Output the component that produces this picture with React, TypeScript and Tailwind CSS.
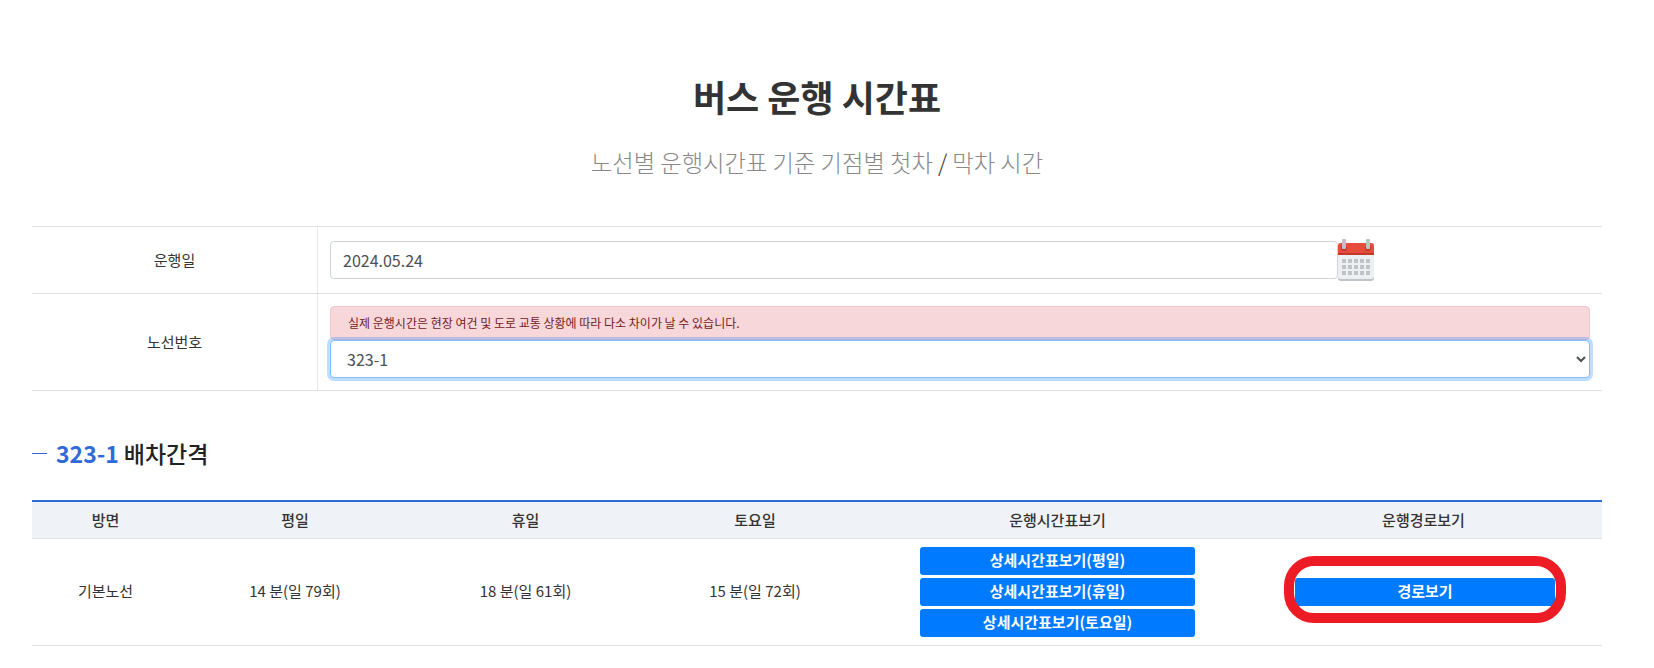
const font = `font-['Noto_Sans_CJK_KR','Noto_Sans',sans-serif]`

function CalendarIcon() {
    return (
        <svg width="36" height="42" viewBox="0 0 36 42" className="shrink-0">
            <path d="M3 4h30a3 3 0 0 1 3 3v32a3 3 0 0 1-3 3H3a3 3 0 0 1-3-3V7a3 3 0 0 1 3-3z" fill="#bdc3c7" />
            <path d="M3 4h30a3 3 0 0 1 3 3v30a3 3 0 0 1-3 3H3a3 3 0 0 1-3-3V7a3 3 0 0 1 3-3z" fill="#ecf0f1" />
            <path d="M3 4h30a3 3 0 0 1 3 3v9H0V7a3 3 0 0 1 3-3z" fill="#e74c3c" />
            <rect x="0" y="14" width="36" height="2" fill="#c0392b" />
            <circle cx="6" cy="9" r="3" fill="#c0392b" />
            <circle cx="30" cy="9" r="3" fill="#c0392b" />
            <rect x="4" y="0" width="4" height="10" rx="1" fill="#bdc3c7" />
            <rect x="28" y="0" width="4" height="10" rx="1" fill="#bdc3c7" />
            {[20, 26, 32].map((y) =>
                [4, 10, 16, 22, 28].map((x) => (
                    <rect key={`${x}-${y}`} x={x} y={y} width="4" height="4" fill="#bdc3c7" />
                ))
            )}
        </svg>
    )
}

function BlueButton({ label }: { label: string }) {
    return (
        <button className="flex h-7 w-full items-center justify-center rounded-[3px] bg-[#007bff] text-[15px] font-bold text-white">
            {label}
        </button>
    )
}

const rows = [
    { name: "기본노선", weekday: "14 분(일 79회)", holiday: "18 분(일 61회)", saturday: "15 분(일 72회)" },
]

export default function App() {
    return (
        <div className={`${font} min-h-[668px] bg-white pb-[23px] pl-8 pr-[52px] pt-[69px] text-[#333]`}>
            <div className="text-center">
                <h1 className="text-[36px] font-bold leading-[54px] text-[#333]">버스 운행 시간표</h1>
                <p className="mt-[21px] text-[23.3px] font-light leading-[36px] text-[#888]">
                    노선별 운행시간표 기준 기점별 첫차 <span className="text-[#333]">/</span> 막차 시간
                </p>
            </div>

            <div className="mt-[46px] border-t border-[#e0e0e4]">
                <div className="grid grid-cols-[286px_1fr] border-b border-[#e0e0e4]">
                    <div className="flex items-center justify-center border-r border-[#e8e8ec] text-[15px]">운행일</div>
                    <div className="flex items-center px-3 py-3">
                        <input
                            readOnly
                            value="2024.05.24"
                            className="h-[38px] w-[1008px] rounded-[4px] border border-[#ced4da] px-3 text-[16px] text-[#495057] outline-none"
                        />
                        <CalendarIcon />
                    </div>
                </div>
                <div className="grid grid-cols-[286px_1fr] border-b border-[#e0e0e4]">
                    <div className="flex items-center justify-center border-r border-[#e8e8ec] text-[15px]">노선번호</div>
                    <div className="px-3 py-3">
                        <div className="flex h-[34px] items-center rounded-[4px] border border-[#f5c6cb] bg-[#f8d7da] px-[17px] text-[12px] text-[#721c24]">
                            실제 운행시간은 현장 여건 및 도로 교통 상황에 따라 다소 차이가 날 수 있습니다.
                        </div>
                        <select
                            defaultValue="323-1"
                            className="h-[38px] w-full rounded-[4px] border border-[#80bdff] bg-white px-3 text-[16px] text-[#495057] shadow-[0_0_0_3px_rgba(0,123,255,0.25)] outline-none"
                        >
                            <option value="323-1">323-1</option>
                        </select>
                    </div>
                </div>
            </div>

            <h2 className="mt-[40px] flex items-center text-[23px] font-medium leading-[44px] text-[#222]">
                <span className="mr-[9px] h-px w-[15px] bg-[#2f6bd8]" />
                <span className="mr-[5px] font-bold text-[#2f6bd8]">323-1</span>
                배차간격
            </h2>

            <table className="mt-[25px] w-full table-fixed border-t-2 border-[#2f6bd8] text-center text-[15px]">
                <colgroup>
                    <col className="w-[147px]" />
                    <col className="w-[232px]" />
                    <col className="w-[229px]" />
                    <col className="w-[230px]" />
                    <col className="w-[375px]" />
                    <col />
                </colgroup>
                <thead>
                    <tr className="h-[37px] border-b border-[#e0e0e4] bg-[#eff2f7] text-[15px]">
                        <th className="font-medium">방면</th>
                        <th className="font-medium">평일</th>
                        <th className="font-medium">휴일</th>
                        <th className="font-medium">토요일</th>
                        <th className="font-medium">운행시간표보기</th>
                        <th className="font-medium">운행경로보기</th>
                    </tr>
                </thead>
                <tbody>
                    {rows.map((row) => (
                        <tr key={row.name} className="border-b border-[#e0e0e4]">
                            <td>{row.name}</td>
                            <td>{row.weekday}</td>
                            <td>{row.holiday}</td>
                            <td>{row.saturday}</td>
                            <td className="px-[50px] py-2">
                                <div className="flex flex-col gap-[3px]">
                                    <BlueButton label="상세시간표보기(평일)" />
                                    <BlueButton label="상세시간표보기(휴일)" />
                                    <BlueButton label="상세시간표보기(토요일)" />
                                </div>
                            </td>
                            <td className="pl-[50px] pr-[47px]">
                                <div className="relative">
                                    <BlueButton label="경로보기" />
                                    <div className="pointer-events-none absolute -inset-x-[11px] -bottom-[17px] -top-[22px] rounded-[30px] border-[10px] border-[#ed1c24]" />
                                </div>
                            </td>
                        </tr>
                    ))}
                </tbody>
            </table>
        </div>
    )
}
